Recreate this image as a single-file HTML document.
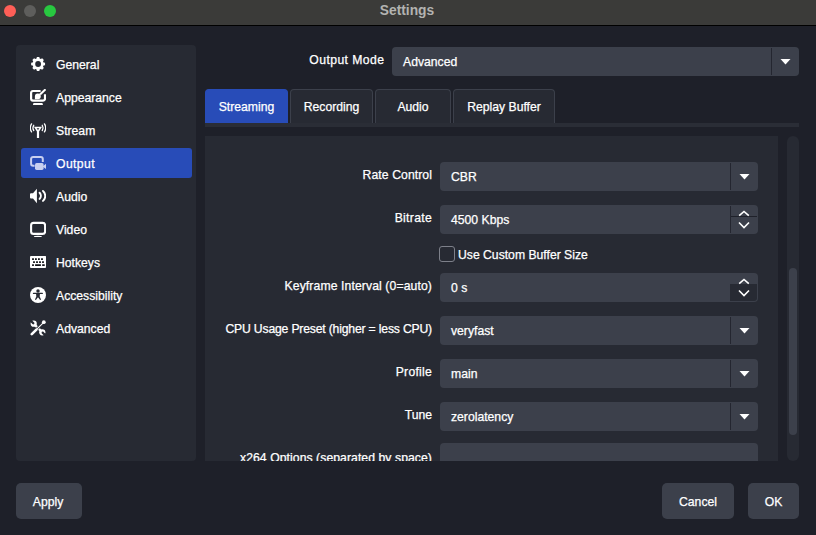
<!DOCTYPE html>
<html><head><meta charset="utf-8">
<style>
*{box-sizing:border-box;margin:0;padding:0}
html,body{width:816px;height:535px;overflow:hidden;background:#1e2029;font-family:"Liberation Sans",sans-serif;color:#fff;-webkit-text-stroke-width:0.25px}
.a{position:absolute}
#title{left:0;top:0;width:816px;height:26px;background:#3b3b39;border-bottom:1px solid #000}
.tl{width:12px;height:12px;border-radius:50%;top:5px}
#ttl{-webkit-text-stroke-width:0;left:-1px;width:816px;top:3px;text-align:center;font-weight:bold;font-size:13.8px;color:#b3b3b1;line-height:16px}
#side{left:16px;top:45px;width:180px;height:416px;background:#272a33;border-radius:4px}
.item{left:0;width:180px;height:33px;font-size:12.2px;line-height:33px}
.item span{position:absolute;left:40px;top:1px}
.item svg{position:absolute;left:14px;top:8px}
#sel{left:21px;top:148px;width:171px;height:30px;background:#284cb8;border-radius:3px}
.lbl{font-size:12.2px;line-height:16px;text-align:right;white-space:nowrap}
.combo{background:#3c404b;border-radius:4px;font-size:12.2px;white-space:nowrap}
.combo .t{position:absolute;left:11px;top:1px}
.sep{position:absolute;width:1px;background:#242630}
.tab{top:89px;height:34px;border:1px solid #3c404b;border-bottom:none;border-radius:4px 4px 0 0;background:#272a33;font-size:12.2px;line-height:35px;text-align:center}
.btn{background:#3c404b;border-radius:5px;font-size:12.2px;line-height:38px;text-align:center;top:483px;height:36px}
</style></head><body>
<div id="title" class="a"></div>
<div class="a tl" style="left:4px;background:#fe5f57"></div>
<div class="a tl" style="left:24px;background:#5e5e5c"></div>
<div class="a tl" style="left:44px;background:#28c840"></div>
<div id="ttl" class="a">Settings</div>

<!-- sidebar -->
<div id="side" class="a"></div>
<div id="sel" class="a"></div>
<div class="a" style="left:16px;top:48px;width:180px">
 <div class="a item" style="top:0"><svg width="16" height="16" viewBox="0 0 16 16"><path fill="#fff" fill-rule="evenodd" d="M6.54,2.62 L6.89,1.05 L9.31,1.05 L9.66,2.62 L10.80,3.09 L12.15,2.23 L13.87,3.95 L13.01,5.30 L13.48,6.44 L15.05,6.79 L15.05,9.21 L13.48,9.56 L13.01,10.70 L13.87,12.05 L12.15,13.77 L10.80,12.91 L9.66,13.38 L9.31,14.95 L6.89,14.95 L6.54,13.38 L5.40,12.91 L4.05,13.77 L2.33,12.05 L3.19,10.70 L2.72,9.56 L1.15,9.21 L1.15,6.79 L2.72,6.44 L3.19,5.30 L2.33,3.95 L4.05,2.23 L5.40,3.09Z M8.1,5.1 A2.9,2.9 0 1 0 8.1,10.9 A2.9,2.9 0 1 0 8.1,5.1Z"/></svg><span>General</span></div>
 <div class="a item" style="top:33px"><svg width="16" height="16" viewBox="0 0 16 16"><path fill="none" stroke="#fff" stroke-width="2.2" d="M10.6,2 H3 a2,2 0 0 0 -1.9,1.9 V9.7 a2,2 0 0 0 1.9,1.9 H13.1 a2,2 0 0 0 1.9,-1.9 V5.2"/><path stroke="#fff" stroke-width="2.1" d="M15.6,0.3 L10,5.6"/><path fill="#fff" d="M7.9,4.4 a2.9,2.9 0 1 1 0,5.8 H4.9 V7.3 a2.9,2.9 0 0 1 3,-2.9Z"/><path fill="#fff" d="M3.5,14 H12.4 L13,16 H2.9Z"/></svg><span>Appearance</span></div>
 <div class="a item" style="top:66px"><svg width="16" height="16" viewBox="0 0 16 16"><g fill="none" stroke="#fff" stroke-width="1.3" stroke-linecap="round"><path d="M3.76,3.25 A5,5 0 0 0 3.76,8.55"/><path d="M1.55,1.87 A7.6,7.6 0 0 0 1.55,9.93"/><path d="M12.24,3.25 A5,5 0 0 1 12.24,8.55"/><path d="M14.45,1.87 A7.6,7.6 0 0 1 14.45,9.93"/></g><path fill="#fff" fill-rule="evenodd" d="M4,4.8 H12 L9.1,9.4 V16 H6.9 V9.4Z M6.6,6.2 H9.4 L8,8Z"/></svg><span>Stream</span></div>
 <div class="a item" style="top:99px"><svg width="16" height="16" viewBox="0 0 16 16"><path fill="none" stroke="#c8d0f0" stroke-width="2" d="M4.6,10.8 H3.1 a2,2 0 0 1 -2,-2 V3.9 a2,2 0 0 1 2,-2 H10.8 a2,2 0 0 1 2,2 V7"/><rect x="5" y="8.1" width="8.6" height="6.8" rx="1.6" fill="#c8d0f0"/><path fill="#c8d0f0" d="M12.6,11.4 L16.1,8.7 V14.1Z"/></svg><span style="letter-spacing:0.4px">Output</span></div>
 <div class="a item" style="top:132px"><svg width="16" height="16" viewBox="0 0 16 16"><path fill="#fff" d="M1,5.2 H3 L6.9,0.7 V15.3 L3,10.6 H1 a1,1 0 0 1 -1,-1 V6.2 a1,1 0 0 1 1,-1Z"/><g fill="none" stroke="#fff" stroke-linecap="round"><path stroke-width="2" d="M9.6,4.8 A4.4,4.4 0 0 1 9.6,10.9"/><path stroke-width="1.9" d="M13,3 A6.6,6.6 0 0 1 13,12.9"/></g></svg><span>Audio</span></div>
 <div class="a item" style="top:165px"><svg width="16" height="16" viewBox="0 0 16 16"><rect x="1.1" y="1.9" width="14" height="11" rx="2.5" fill="none" stroke="#fff" stroke-width="2.1"/><ellipse cx="7.9" cy="15.6" rx="4" ry="0.75" fill="#fff"/></svg><span>Video</span></div>
 <div class="a item" style="top:198px"><svg width="16" height="16" viewBox="0 0 16 16"><path fill="#fff" d="M1,1.9 H15.1 a1,1 0 0 1 1,1 V13 a1,1 0 0 1 -1,1 H1 a1,1 0 0 1 -1,-1 V2.9 a1,1 0 0 1 1,-1Z"/><path fill="#111217" d="M2.1,4.2 h1.8 v1.7 h-1.8Z M5.0,4.2 h1.8 v1.7 h-1.8Z M8.0,4.2 h1.8 v1.7 h-1.8Z M11.1,4.2 h1.8 v1.7 h-1.8Z M3.1,7.2 h1.8 v1.7 h-1.8Z M6.1,7.2 h1.8 v1.7 h-1.8Z M9.1,7.2 h1.8 v1.7 h-1.8Z M12.1,7.2 h1.8 v1.7 h-1.8Z M2.1,10.2 h1.8 v1.8 h-1.8Z M5.1,10.2 h5.8 v1.8 h-5.8Z M12.2,10.2 h2.5 v1.8 h-2.5Z"/></svg><span>Hotkeys</span></div>
 <div class="a item" style="top:231px"><svg width="16" height="16" viewBox="0 0 16 16"><circle cx="8" cy="8" r="8" fill="#fff"/><circle cx="8" cy="3.9" r="1.75" fill="#272a33"/><path stroke="#272a33" stroke-width="1.3" stroke-linecap="round" d="M3.5,6.4 H12.3"/><path fill="#272a33" d="M6,6.3 H10 L9.7,9.6 L10.9,12.3 a0.6,0.6 0 0 1 -1,0.5 L8,10.2 L6.1,12.8 a0.6,0.6 0 0 1 -1,-0.5 L6.3,9.6Z"/></svg><span>Accessibility</span></div>
 <div class="a item" style="top:264px"><svg width="16" height="16" viewBox="0 0 16 16"><path stroke="#fff" stroke-width="2.4" d="M3.6,3.6 L12.4,12.4"/><circle cx="3.7" cy="3.7" r="3.1" fill="#fff"/><circle cx="12.3" cy="12.3" r="3.1" fill="#fff"/><g fill="#272a33"><circle cx="3.3" cy="3.3" r="1.15"/><rect x="-1.15" y="-5" width="2.3" height="5" transform="translate(3.3,3.3) rotate(-45)"/><circle cx="12.7" cy="12.7" r="1.15"/><rect x="-1.15" y="0" width="2.3" height="5" transform="translate(12.7,12.7) rotate(-45)"/></g><path stroke="#272a33" stroke-width="2.8" d="M12.6,3.4 L6.4,9.6"/><path stroke="#fff" stroke-width="1.1" d="M13.2,2.8 L6.4,9.6"/><circle cx="13.8" cy="2.2" r="1.9" fill="#fff"/><path stroke="#fff" stroke-width="2.6" stroke-linecap="round" d="M6.4,9.6 L1.8,14.2"/></svg><span>Advanced</span></div>
</div>

<!-- output mode -->
<div class="a lbl" style="left:290px;width:94.4px;top:52px;letter-spacing:0.42px">Output Mode</div>
<div class="a combo" style="left:392px;top:47px;width:407px;height:29px;line-height:29px"><span class="t">Advanced</span></div>
<div class="sep" style="left:771px;top:48px;height:27px"></div>
<svg class="a" style="left:780px;top:59px" width="11" height="6" viewBox="0 0 11 6"><path fill="#fff" d="M0.5,0 H10.5 L5.5,5.5Z"/></svg>

<!-- tabs -->
<div class="a tab" style="left:205px;width:83px;background:#284cb8;border-color:#284cb8">Streaming</div>
<div class="a tab" style="left:290px;width:83px">Recording</div>
<div class="a tab" style="left:375px;width:76px">Audio</div>
<div class="a tab" style="left:453px;width:102px">Replay Buffer</div>
<div class="a" style="left:205px;top:123px;width:594px;height:4px;background:#2a2d36"></div>

<!-- scroll area -->
<div class="a" style="left:205px;top:136px;width:573px;height:325px;background:#272a33;overflow:hidden" id="sa">
<div class="a lbl" style="left:0;width:227px;top:25px;height:28px;line-height:28px;letter-spacing:0.08px">Rate Control</div>
<div class="a combo" style="left:235px;top:26px;width:318px;height:29px;line-height:28px"><span class="t">CBR</span></div>
<div class="sep" style="left:525px;top:27px;height:27px"></div>
<svg class="a" style="left:534px;top:38px" width="11" height="6" viewBox="0 0 11 6"><path fill="#fff" d="M0.5,0 H10.5 L5.5,5.5Z"/></svg>
<div class="a lbl" style="left:0;width:227px;top:68px;height:28px;line-height:28px;letter-spacing:0.3px">Bitrate</div>
<div class="a combo" style="left:235px;top:69px;width:318px;height:29px;line-height:28px"><span class="t">4500 Kbps</span></div>
<div class="sep" style="left:525px;top:70px;height:27px"></div>
<div class="a" style="left:526px;top:80px;width:26px;height:1px;background:#1f212a"></div>
<svg class="a" style="left:533px;top:74px" width="12" height="19" viewBox="0 0 12 19"><g fill="none" stroke="#fff" stroke-width="1.6"><path d="M1.2,5.6 L6,1.5 L10.8,5.6"/><path d="M1,12.5 L6,17.5 L11,12.5"/></g></svg>
<div class="a lbl" style="left:0;width:227px;top:136px;height:28px;line-height:28px;letter-spacing:0.11px">Keyframe Interval (0=auto)</div>
<div class="a combo" style="left:235px;top:137px;width:318px;height:29px;line-height:28px"><span class="t">0 s</span></div>
<div class="a" style="left:525px;top:148px;width:27px;height:17px;background:#272a33;border-radius:0 0 3px 0"></div>
<svg class="a" style="left:533px;top:142px" width="12" height="19" viewBox="0 0 12 19"><g fill="none" stroke="#fff" stroke-width="1.6"><path d="M1.2,5.6 L6,1.5 L10.8,5.6"/><path d="M1,12.5 L6,17.5 L11,12.5"/></g></svg>
<div class="a lbl" style="left:0;width:227px;top:179px;height:28px;line-height:28px;letter-spacing:-0.18px">CPU Usage Preset (higher = less CPU)</div>
<div class="a combo" style="left:235px;top:180px;width:318px;height:29px;line-height:28px"><span class="t">veryfast</span></div>
<div class="sep" style="left:525px;top:181px;height:27px"></div>
<svg class="a" style="left:534px;top:192px" width="11" height="6" viewBox="0 0 11 6"><path fill="#fff" d="M0.5,0 H10.5 L5.5,5.5Z"/></svg>
<div class="a lbl" style="left:0;width:227px;top:222px;height:28px;line-height:28px;letter-spacing:0.25px">Profile</div>
<div class="a combo" style="left:235px;top:223px;width:318px;height:29px;line-height:28px"><span class="t">main</span></div>
<div class="sep" style="left:525px;top:224px;height:27px"></div>
<svg class="a" style="left:534px;top:235px" width="11" height="6" viewBox="0 0 11 6"><path fill="#fff" d="M0.5,0 H10.5 L5.5,5.5Z"/></svg>
<div class="a lbl" style="left:0;width:227px;top:265px;height:28px;line-height:28px">Tune</div>
<div class="a combo" style="left:235px;top:266px;width:318px;height:29px;line-height:28px"><span class="t">zerolatency</span></div>
<div class="sep" style="left:525px;top:267px;height:27px"></div>
<svg class="a" style="left:534px;top:278px" width="11" height="6" viewBox="0 0 11 6"><path fill="#fff" d="M0.5,0 H10.5 L5.5,5.5Z"/></svg>
<div class="a lbl" style="left:0;width:227px;top:308px;height:28px;line-height:28px;letter-spacing:0.07px">x264 Options (separated by space)</div>
<div class="a combo" style="left:235px;top:307px;width:318px;height:29px;line-height:28px"><span class="t"></span></div>
<div class="a" style="left:234px;top:110px;width:16px;height:16px;border:1.5px solid #7d808a;border-radius:3px"></div>
<div class="a lbl" style="left:253px;top:111px;height:16px;line-height:16px;text-align:left">Use Custom Buffer Size</div>
</div>
<div class="a" style="left:787px;top:136px;width:12px;height:325px;background:#272a33;border-radius:6px"></div>
<div class="a" style="left:789px;top:268px;width:8px;height:167px;background:#3c404b;border-radius:4px"></div>

<!-- buttons -->
<div class="a btn" style="left:16px;width:66px;padding-right:2px">Apply</div>
<div class="a btn" style="left:662px;width:72px">Cancel</div>
<div class="a btn" style="left:748px;width:51px">OK</div>
</body></html>
